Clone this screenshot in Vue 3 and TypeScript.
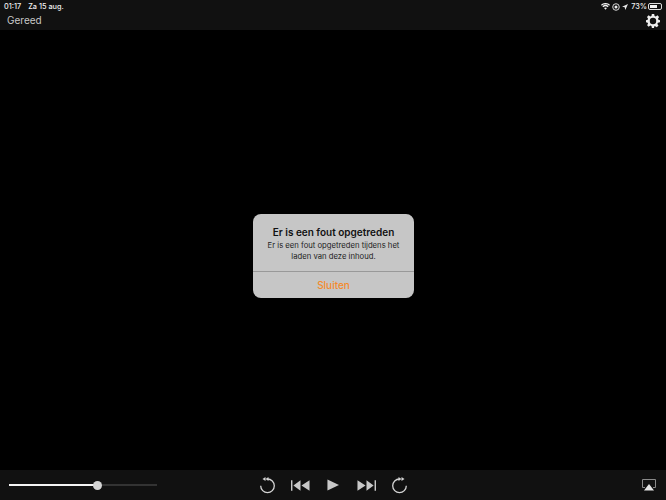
<script setup lang="ts">
const progress = 60
</script>

<template>
  <div class="screen">
    <header class="top">
      <div class="status">
        <div class="status-left"><span>01:17</span><span>Za 15 aug.</span></div>
        <div class="status-right">
          <svg width="9" height="7" viewBox="0 0 11 8"><path d="M5.500 8 3.700 5.900a2.700 2.700 0 0 1 3.600 0zM2.800 4.900 1.700 3.700a5.600 5.600 0 0 1 7.600 0L8.200 4.900a4 4 0 0 0-5.400 0zM1 3 0 1.900a8 8 0 0 1 11 0L10 3a6.600 6.600 0 0 0-9 0z" fill="#f2f2f2"/></svg>
          <svg width="8" height="8" viewBox="0 0 9 9"><circle cx="4.500" cy="4.500" r="3.700" fill="none" stroke="#eee" stroke-width="1"/><circle cx="4.500" cy="4.500" r="1.700" fill="#eee"/></svg>
          <svg width="6" height="6" viewBox="0 0 8 8"><path d="M8 0 0 3.600l3.600.8.8 3.600z" fill="#e8e8e8"/></svg>
          <span class="pct">73%</span>
          <div class="battery"><div class="level"></div></div>
        </div>
      </div>
      <div class="nav">
        <span class="done">Gereed</span>
        <svg class="gear" width="14" height="14" viewBox="0 0 24 24"><path fill="#eee" fill-rule="evenodd" d="M10 0h4l.7 3.400 2 .8L19.600 2.300l2.800 2.800-1.900 2.900.8 2L24 10.700v3.600l-3.700.7-.8 2 1.900 2.900-2.800 2.800-2.900-1.900-2 .8L13.900 24h-3.800l-.7-3.300-2-.8-2.900 1.900-2.800-2.800L3.600 17l-.8-2L0 14.300v-3.600l2.800-.7.800-2-1.900-2.900 2.800-2.800 2.900 1.900 2-.8zM12 6.500a5.500 5.500 0 1 0 0 11 5.500 5.500 0 0 0 0-11z"/></svg>
      </div>
    </header>

    <main class="stage">
      <div class="dialog">
        <div class="body">
          <div class="title">Er is een fout opgetreden</div>
          <div class="message">Er is een fout opgetreden tijdens het<br />laden van deze inhoud.</div>
        </div>
        <div class="action">Sluiten</div>
      </div>
    </main>

    <footer class="bottom">
      <div class="slider">
        <div class="played" :style="{ width: progress + '%' }"></div>
        <div class="thumb"></div>
        <div class="rest"></div>
      </div>
      <div class="controls">
        <svg width="18" height="18" viewBox="0 0 18 18"><path d="M8.500 3A6.800 6.800 0 1 1 1.700 9.800" fill="none" stroke="#d4d4d4" stroke-width="1.300"/><path d="M9.500 1v4L6.500 3zM6.500 1v4L3.500 3z" fill="#d4d4d4"/></svg>
        <svg width="19" height="11" viewBox="0 0 20 11"><path d="M0 0h1.500v11H0zM10 0v11L2.500 5.500zM19.500 0v11L11 5.500z" fill="#c8c8c8"/></svg>
        <svg class="play" width="12" height="12" viewBox="0 0 13 12"><path d="M.5 0 13 6 .5 12z" fill="#c8c8c8"/></svg>
        <svg width="19" height="11" viewBox="0 0 20 11"><path d="M20 0h-1.500v11H20zM10 0v11l7.500-5.500zM.5 0v11L9 5.500z" fill="#c8c8c8"/></svg>
        <svg class="forward" width="18" height="18" viewBox="0 0 18 18"><path d="M8.500 3A6.800 6.800 0 1 0 15.300 9.800" fill="none" stroke="#d4d4d4" stroke-width="1.300"/><path d="M7.500 1v4L10.500 3zM10.500 1v4L13.500 3z" fill="#d4d4d4"/></svg>
      </div>
      <svg class="airplay" width="14" height="12" viewBox="0 0 14 12"><path d="M3 8.500H.5V.5h13v8H11" fill="none" stroke="#8a8a8a" stroke-width="1"/><path d="M7 5l5 6.500H2z" fill="#e6e6e6"/></svg>
    </footer>
  </div>
</template>

<style scoped>
.screen {
  width: 666px;
  height: 500px;
  display: flex;
  flex-direction: column;
  background: #000;
  font-family: Inter, "Liberation Sans", Arial, sans-serif;
  overflow: hidden;
}
.top {
  height: 30px;
  background: #111;
  display: flex;
  flex-direction: column;
  flex: none;
}
.status {
  height: 11px;
  padding: 0 4px;
  display: flex;
  justify-content: space-between;
  align-items: center;
  color: #f0f0f0;
  font-size: 7.300px;
  font-weight: 500;
  margin-top: 1px;
}
.status-left {
  display: flex;
  gap: 7px;
}
.status-right {
  display: flex;
  align-items: center;
  gap: 2px;
}
.pct {
  margin: 0 -1px 0 1px;
}
.battery {
  box-sizing: content-box;
  width: 10px;
  height: 3px;
  border: 1px solid #ddd;
  border-radius: 2px;
  padding: 1px;
}
.level {
  height: 100%;
  width: 73%;
  background: #f2f2f2;
}
.nav {
  flex: 1;
  display: flex;
  justify-content: space-between;
  align-items: center;
  padding: 0 6px 2px 7px;
}
.gear {
  margin-top: 2px;
}
.done {
  color: #c8c8c8;
  font-size: 10px;
}
.stage {
  flex: 1;
  display: flex;
  justify-content: center;
  align-items: center;
  padding-left: 1px;
  padding-top: 12px;
}
.dialog {
  width: 161px;
  height: 84px;
  background: #c6c6c6;
  border-radius: 8px;
  display: flex;
  flex-direction: column;
  text-align: center;
}
.body {
  flex: none;
  height: 58px;
  border-bottom: 1px solid #999;
  padding-top: 12px;
  box-sizing: border-box;
}
.title {
  font-size: 10px;
  font-weight: 600;
  color: #111;
  line-height: 13px;
}
.message {
  font-size: 7.700px;
  line-height: 11px;
  color: #222;
  margin-top: 1px;
}
.action {
  flex: 1;
  display: flex;
  align-items: center;
  justify-content: center;
  color: #f58a2a;
  font-size: 10px;
  font-weight: 500;
}
.bottom {
  height: 30px;
  background: #111;
  flex: none;
  display: flex;
  align-items: center;
  padding: 0 10px 0 9px;
}
.slider {
  width: 148px;
  display: flex;
  align-items: center;
}
.played {
  height: 2px;
  background: #f4f4f4;
}
.thumb {
  position: relative;
  z-index: 1;
  width: 9px;
  height: 9px;
  border-radius: 50%;
  background: #d4d4d4;
  flex: none;
  margin: 0 -4.500px;
}
.rest {
  flex: 1;
  height: 2px;
  background: #333;
}
.controls {
  display: flex;
  align-items: center;
  gap: 14px;
  margin-left: 102px;
}
.play {
  margin: 0 4px 0 3px;
}
.forward {
  margin-left: 1px;
}
.airplay {
  margin-left: auto;
}
</style>
